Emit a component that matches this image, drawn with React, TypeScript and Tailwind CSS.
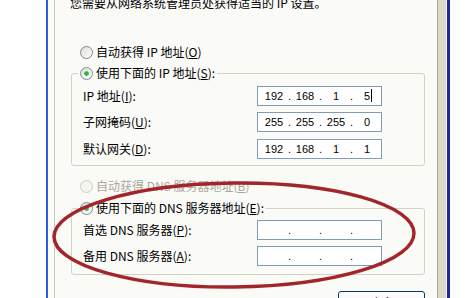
import React from 'react';

const cjk = { fontFamily: '"Noto Sans CJK SC", "Noto Sans", sans-serif' };

const Radio = ({ checked = false, disabled = false }: { checked?: boolean; disabled?: boolean }) => (
  <span
    className={
      'w-[13px] h-[13px] shrink-0 rounded-full border flex items-center justify-center ' +
      (disabled
        ? 'border-[#cfcdc0] bg-[#f6f5ef]'
        : 'border-[#7d8a96] bg-gradient-to-br from-[#dcdcd6] to-white')
    }
  >
    {checked && <span className="w-[5px] h-[5px] rounded-full bg-[#36a836] border border-[#5fbf4f]" />}
  </span>
);

const Key = ({ k }: { k: string }) => (
  <span>
    (<span className="underline underline-offset-1">{k}</span>)
  </span>
);

const IpBox = ({ parts, caret = false }: { parts: string[]; caret?: boolean }) => (
  <div
    className="w-[125px] h-[20px] shrink-0 border border-[#7f9db9] bg-white flex items-center pl-[2px] text-[11px] text-black"
    style={{ fontFamily: '"Liberation Sans", Arial, sans-serif' }}
  >
    {[0, 1, 2, 3].map((i) => (
      <React.Fragment key={i}>
        {i > 0 && <span className="w-[3px] text-center leading-none">.</span>}
        <span className="w-[28px] text-center leading-none relative">
          {parts[i] ?? ''}
          {caret && i === 3 && <span className="absolute right-[9px] top-[-2px] w-px h-[13px] bg-black" />}
        </span>
      </React.Fragment>
    ))}
  </div>
);

const Row = ({ label, children, className = '' }: { label: React.ReactNode; children: React.ReactNode; className?: string }) => (
  <div className={'flex items-center justify-between pl-[11px] pr-[42px] ' + className}>
    <span className="text-[12px] leading-[14px] text-black">{label}</span>
    {children}
  </div>
);

export default function App() {
  return (
    <div className="relative w-[474px] h-[298px] overflow-hidden bg-white flex" style={cjk}>
      <div className="w-[46px] shrink-0 bg-white" />
      <div className="w-[404px] shrink-0 flex">
        <div className="w-[2px] bg-[#2b5fd9]" />
        <div className="w-[6px] bg-[#fbfbf8]" />
        <div className="w-px bg-[#cbc9bd]" />
        <div className="flex-1 bg-[#fafaf7] flex flex-col text-black">
          <p className="ml-[15px] -mt-[4px] text-[12px] leading-[14px] whitespace-nowrap">
            您需要从网络系统管理员处获得适当的 IP 设置。
          </p>

          <div className="ml-[25px] mt-[35px] h-[14px] flex items-center gap-[3px] text-[12px] leading-[14px]">
            <Radio />
            <span>自动获得 IP 地址<Key k="O" /></span>
          </div>

          <fieldset className="ml-[16px] mt-[7px] w-[354px] border border-[#d3d1c3] rounded-[3px] pb-[6px]">
            <legend className="ml-[6px] px-[2px]">
              <span className="flex items-center gap-[3px] text-[12px] leading-[14px] h-[14px]">
                <Radio checked />
                <span>使用下面的 IP 地址<Key k="S" />:</span>
              </span>
            </legend>
            <Row label={<>IP 地址<Key k="I" />:</>} className="mt-[6px]">
              <IpBox parts={['192', '168', '1', '5']} caret />
            </Row>
            <Row label={<>子网掩码<Key k="U" />:</>} className="mt-[6px]">
              <IpBox parts={['255', '255', '255', '0']} />
            </Row>
            <Row label={<>默认网关<Key k="D" />:</>} className="mt-[7px]">
              <IpBox parts={['192', '168', '1', '1']} />
            </Row>
          </fieldset>

          <div className="ml-[25px] mt-[13px] h-[14px] flex items-center gap-[3px] text-[12px] leading-[14px] text-[#aca899]">
            <Radio disabled />
            <span>自动获得 DNS 服务器地址<Key k="B" /></span>
          </div>

          <fieldset className="ml-[16px] mt-[8px] w-[354px] border border-[#d3d1c3] rounded-[3px] pb-[8px]">
            <legend className="ml-[6px] px-[2px]">
              <span className="flex items-center gap-[3px] text-[12px] leading-[14px] h-[14px]">
                <Radio checked />
                <span>使用下面的 DNS 服务器地址<Key k="E" />:</span>
              </span>
            </legend>
            <Row label={<>首选 DNS 服务器<Key k="P" />:</>} className="mt-[5px]">
              <IpBox parts={[]} />
            </Row>
            <Row label={<>备用 DNS 服务器<Key k="A" />:</>} className="mt-[6px]">
              <IpBox parts={[]} />
            </Row>
          </fieldset>

          <div className="self-end mr-[12px] mt-[16px] w-[87px] h-[23px] shrink-0 border border-[#003c74] rounded-[3px] bg-gradient-to-b from-white to-[#ecebe6] flex items-center justify-center text-[12px]">
            确定
          </div>
        </div>
        <div className="w-px bg-[#aaa899]" />
        <div className="w-[8px] bg-[#dcd8c4]" />
        <div className="w-px bg-[#f1efe6]" />
        <div className="w-[3px] bg-[#1a2c9c]" />
      </div>
      <div className="flex-1 bg-white" />

      <svg className="absolute inset-0 pointer-events-none" width="474" height="298" viewBox="0 0 474 298">
        <ellipse
          cx="234"
          cy="235"
          rx="180"
          ry="52"
          transform="rotate(-0.6 234 235)"
          fill="none"
          stroke="#a3252c"
          strokeWidth="3.5"
        />
      </svg>
    </div>
  );
}
